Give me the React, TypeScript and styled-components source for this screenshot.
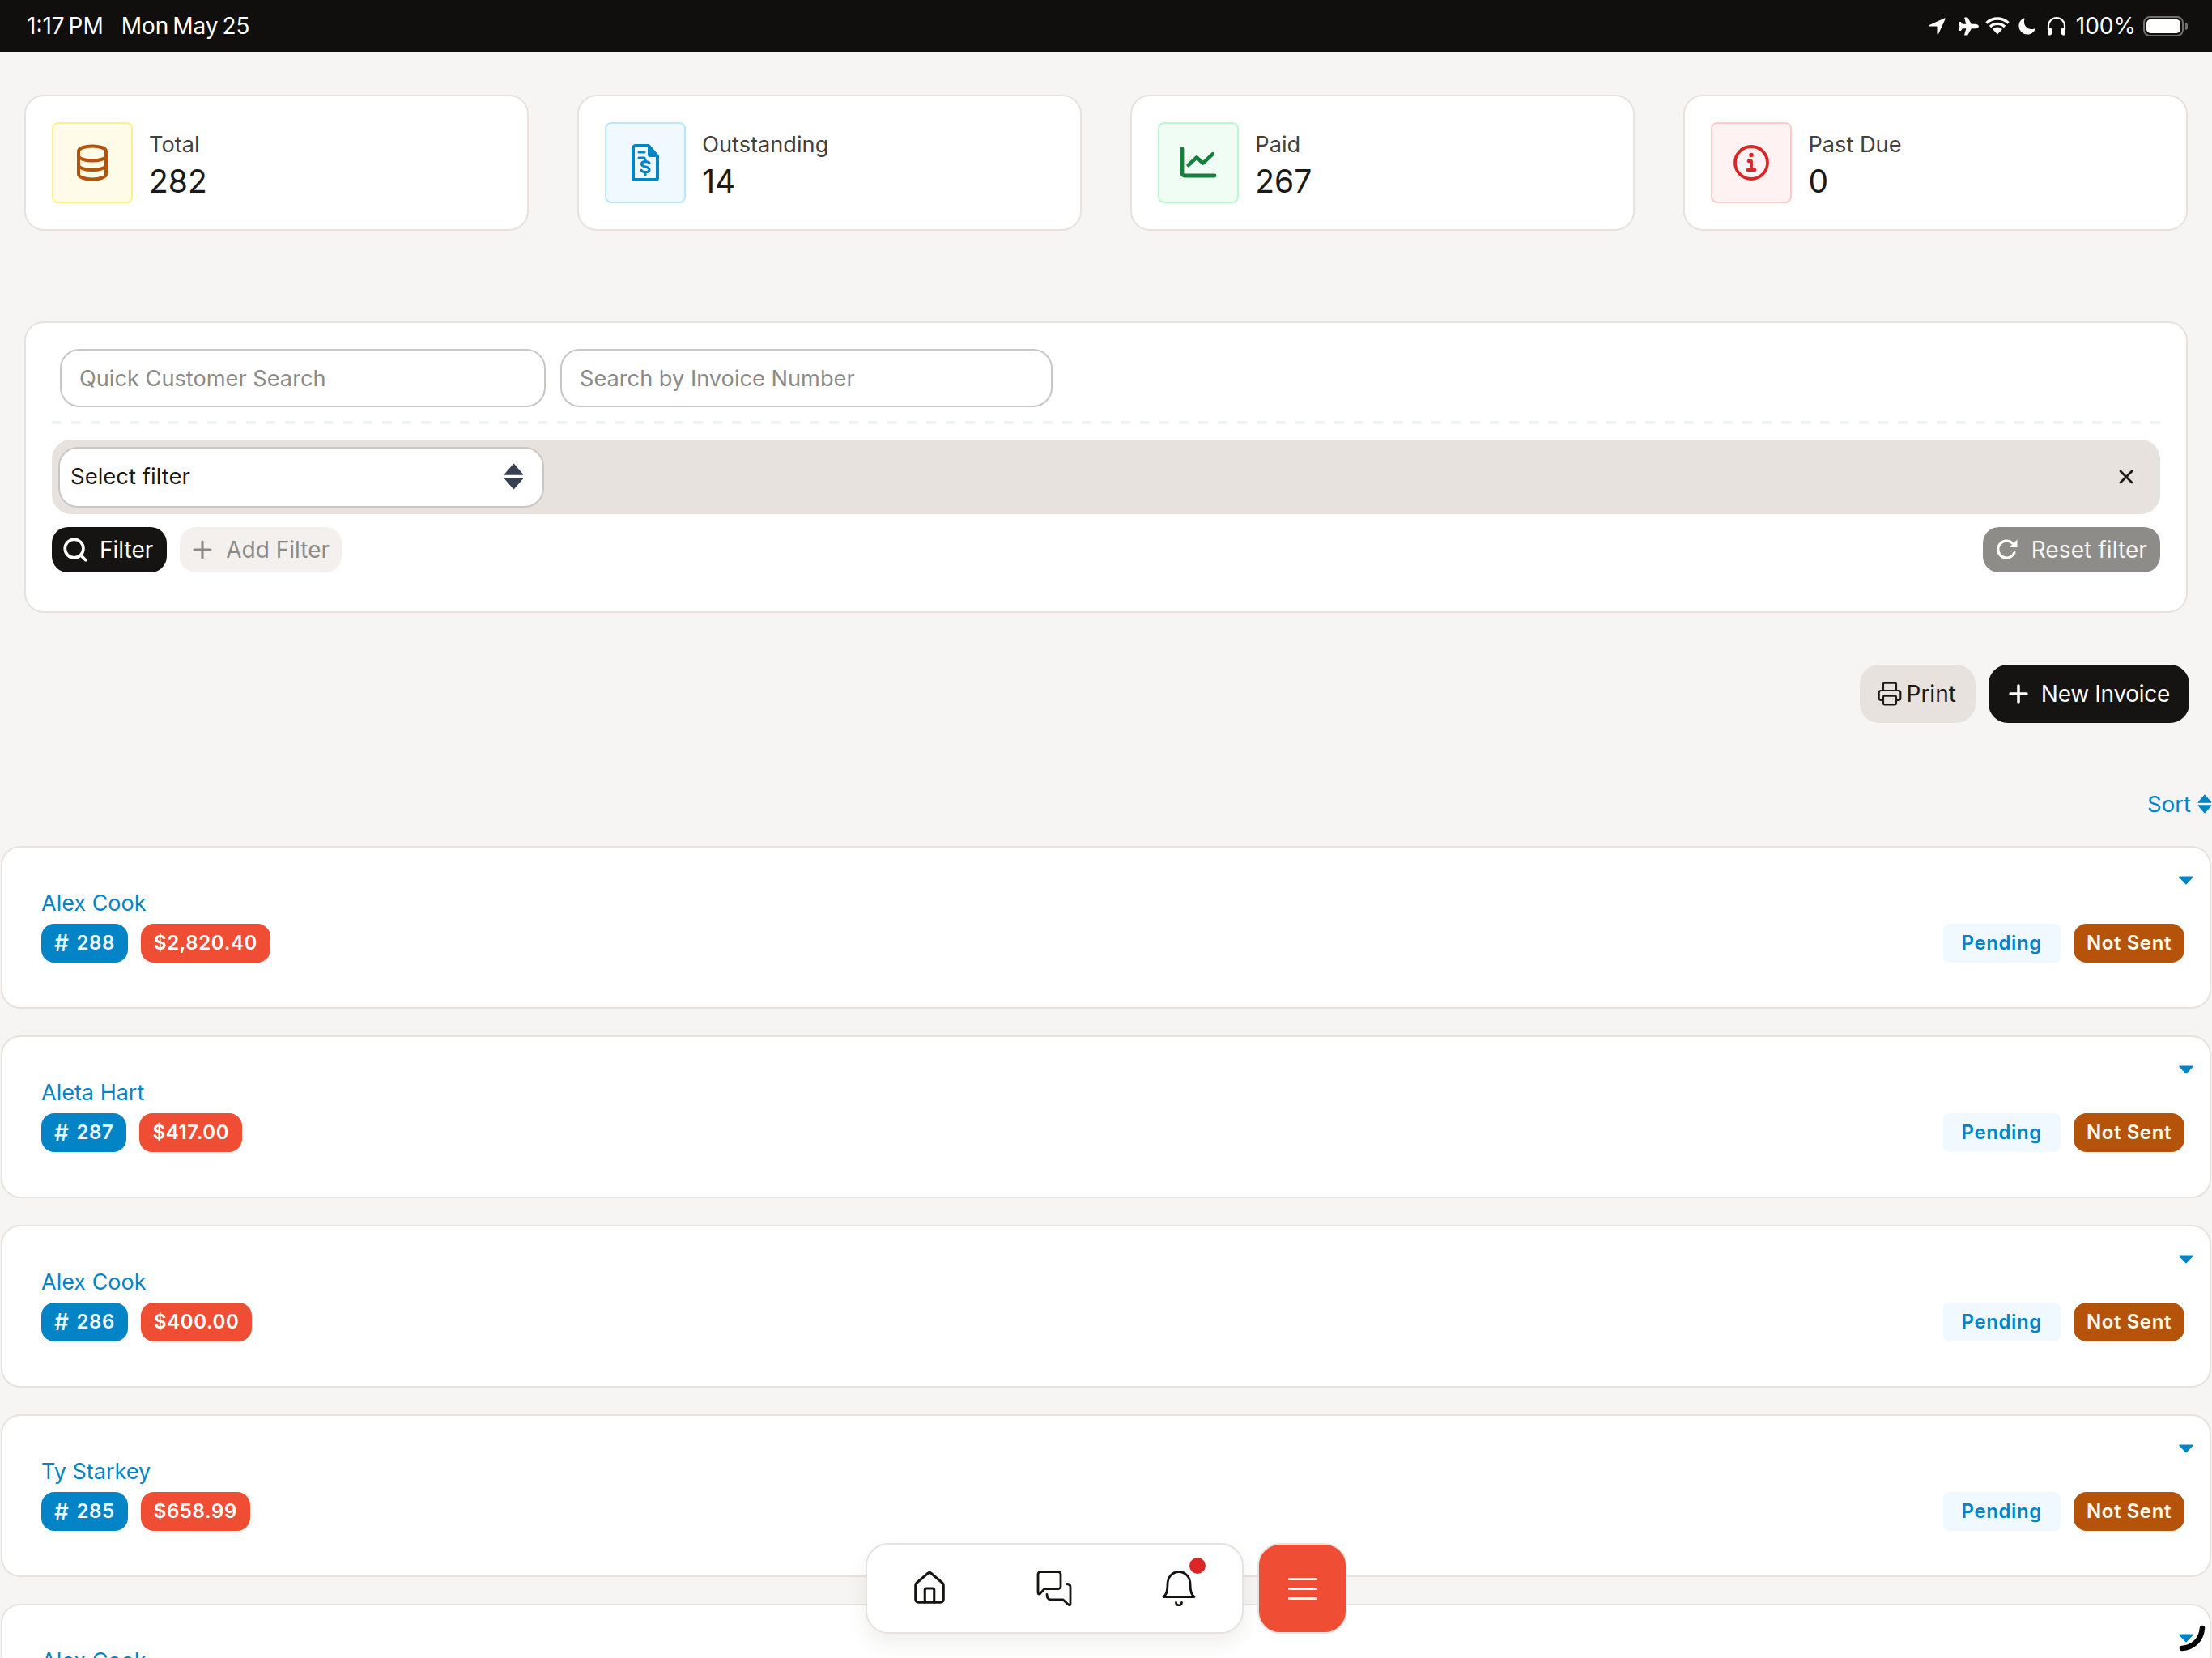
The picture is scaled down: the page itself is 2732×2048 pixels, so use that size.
import React from "react";
import styled, { createGlobalStyle } from "styled-components";
import { FaPlane } from "react-icons/fa";
import { IoMoon, IoNavigate } from "react-icons/io5";
import { Plus, Printer, Search, X, House } from "lucide-react";

const Global = createGlobalStyle`
  * { box-sizing: border-box; }
  html, body { margin: 0; padding: 0; width: 2732px; height: 2048px; overflow: hidden; background: #f6f5f3; }
  body { font-family: Inter, "Liberation Sans", sans-serif; color: #1c1917; }
  #root { height: 2048px; overflow: hidden; }
`;

const Page = styled.div`
  width: 2732px;
  height: 2048px;
  overflow: hidden;
`;

const StatusBar = styled.header`
  height: 64px;
  background: #100f0d;
  color: #fff;
  display: flex;
  align-items: center;
  justify-content: space-between;
  padding: 0 30px 0 33px;
  font-size: 28px;
`;

const StatusLeft = styled.div`
  display: flex;
  gap: 22px;
  word-spacing: -3px;
`;

const StatusRight = styled.div`
  display: flex;
  align-items: center;
  color: #fff;
`;

const StatusIcon = styled.span<{ $gap: number }>`
  display: flex;
  margin-right: ${(p) => p.$gap}px;
`;

const Percent = styled.span`
  margin-right: 9px;
  font-size: 28px;
`;

const Battery = styled.span`
  width: 50px;
  height: 25px;
  border: 2px solid #6f6f6e;
  border-radius: 8px;
  padding: 2px;
  display: flex;
  margin-right: 5px;
  position: relative;
  &::before {
    content: "";
    flex: 1;
    background: #fff;
    border-radius: 5px;
  }
  &::after {
    content: "";
    position: absolute;
    right: -7px;
    top: 6px;
    width: 3px;
    height: 9px;
    background: #6f6f6e;
    border-radius: 0 3px 3px 0;
  }
`;

const Stats = styled.section`
  display: grid;
  grid-template-columns: repeat(4, 622.5px);
  justify-content: space-between;
  margin: 53px 30px 0;
`;

const StatCard = styled.article`
  height: 168px;
  background: #fff;
  border: 2px solid #e7e2de;
  border-radius: 24px;
  padding: 0 32px;
  display: flex;
  align-items: center;
  gap: 20px;
`;

const IconBox = styled.div<{ $bg: string; $line: string }>`
  width: 100px;
  height: 100px;
  border-radius: 8px;
  background: ${(p) => p.$bg};
  border: 2px solid ${(p) => p.$line};
  display: flex;
  align-items: center;
  justify-content: center;
`;

const StatText = styled.div`
  display: flex;
  flex-direction: column;
  gap: 9px;
`;

const StatLabel = styled.span`
  font-size: 27.2px;
  line-height: 36px;
  color: #44403c;
`;

const StatValue = styled.span`
  font-size: 39px;
  line-height: 36px;
  color: #1c1917;
`;

const FilterCard = styled.section`
  margin: 112px 30px 0;
  height: 360px;
  background: #fff;
  border: 2px solid #e7e2de;
  border-radius: 24px;
  padding: 32px 32px 0;
`;

const SearchRow = styled.div`
  display: flex;
  gap: 18px;
  padding-left: 10px;
`;

const SearchInput = styled.input<{ $w: number }>`
  width: ${(p) => p.$w}px;
  height: 72px;
  border: 2px solid #c9c6c3;
  border-radius: 24px;
  background: #fff;
  padding: 0 22px;
  font: 400 27.2px Inter, sans-serif;
  color: #1c1917;
  outline: none;
  &::placeholder { color: #8c8a87; opacity: 1; }
`;

const Dashes = styled.div`
  height: 4px;
  margin-top: 17px;
  background: repeating-linear-gradient(90deg, #eff1f8 0 12px, transparent 12px 24px);
`;

const FilterBar = styled.div`
  margin-top: 19px;
  height: 92px;
  background: #e7e2de;
  border-radius: 24px;
  display: flex;
  align-items: center;
  justify-content: space-between;
  padding: 0 28px 0 8px;
`;

const SelectBox = styled.div`
  width: 600px;
  height: 75px;
  border: 2px solid #c9c6c3;
  border-radius: 24px;
  background: #fff;
  display: flex;
  align-items: center;
  justify-content: space-between;
  padding: 0 23px 2px 13px;
  font-size: 27.5px;
  color: #1c1917;
`;

const CloseButton = styled.button`
  display: flex;
  border: 0;
  padding: 0;
  background: none;
  color: #1c1917;
`;

const ButtonRow = styled.div`
  margin-top: 16px;
  display: flex;
  align-items: center;
  gap: 16px;
`;

const Pill = styled.button<{ $bg: string; $fg: string; $h?: number; $r?: number; $pad?: string; $gap?: number; $ls?: number }>`
  height: ${(p) => p.$h ?? 56}px;
  border-radius: ${(p) => p.$r ?? 20}px;
  background: ${(p) => p.$bg};
  color: ${(p) => p.$fg};
  border: 0;
  padding: ${(p) => p.$pad ?? "0 16px"};
  display: flex;
  align-items: center;
  gap: ${(p) => p.$gap ?? 17}px;
  font: 400 28px Inter, sans-serif;
  letter-spacing: ${(p) => p.$ls ?? 0}px;
  white-space: nowrap;
`;

const Spacer = styled.div`
  flex: 1;
`;

const Actions = styled.div`
  display: flex;
  justify-content: flex-end;
  gap: 16px;
  margin: 64px 28px 0 0;
`;

const SortRow = styled.div`
  display: flex;
  justify-content: flex-end;
  align-items: center;
  gap: 8px;
  margin-top: 82px;
  height: 34px;
  padding-top: 2px;
  color: #0284c7;
  font-size: 27.5px;
`;

const List = styled.div`
  display: flex;
  flex-direction: column;
  gap: 33.5px;
  margin: 36px 1px 0;
`;

const Row = styled.article`
  flex: none;
  height: 200.5px;
  background: #fff;
  border: 2px solid #e7e2de;
  border-radius: 24px;
  padding: 35px 31px 55px 48px;
  display: flex;
  justify-content: space-between;
`;

const RowLeft = styled.div`
  display: flex;
  flex-direction: column;
  justify-content: flex-end;
  gap: 8px;
`;

const CustomerName = styled.a`
  font-size: 27px;
  line-height: 34px;
  color: #0284c7;
`;

const RowRight = styled.div`
  display: flex;
  flex-direction: column;
  justify-content: space-between;
  align-items: flex-end;
`;

const CaretButton = styled.span`
  display: flex;
  margin-right: -11px;
`;

const Badges = styled.div`
  display: flex;
  gap: 16px;
`;

const Badge = styled.span<{ $bg: string; $fg: string; $r?: number; $pad?: number }>`
  height: 48px;
  padding: 0 ${(p) => p.$pad ?? 16}px;
  display: inline-flex;
  align-items: center;
  border-radius: ${(p) => p.$r ?? 16}px;
  background: ${(p) => p.$bg};
  color: ${(p) => p.$fg};
  font-size: 24px;
  font-weight: 600;
  letter-spacing: 0.6px;
  white-space: nowrap;
`;

const HashMark = styled.span`
  font-size: 28px;
  font-weight: 500;
  margin-right: 9px;
`;

const Dock = styled.nav`
  position: fixed;
  left: 1068.5px;
  top: 1906px;
  display: flex;
  gap: 17.5px;
`;

const DockCard = styled.div`
  width: 467px;
  height: 112px;
  background: #fff;
  border: 2px solid #e7e2de;
  border-radius: 28px;
  box-shadow: 0 12px 24px rgba(60, 50, 40, 0.08);
  display: grid;
  grid-template-columns: repeat(3, 154px);
`;

const DockItem = styled.button`
  position: relative;
  border: 0;
  padding: 0;
  background: none;
  color: #151412;
  display: flex;
  align-items: center;
  justify-content: center;
`;

const RedDot = styled.span`
  position: absolute;
  left: 90px;
  top: 16px;
  width: 20px;
  height: 20px;
  border-radius: 50%;
  background: #dc2626;
`;

const MenuButton = styled.button`
  width: 111px;
  height: 112px;
  background: #ef4e34;
  border: 2px solid #e7e2de;
  border-radius: 28px;
  display: flex;
  flex-direction: column;
  align-items: center;
  justify-content: center;
  gap: 9px;
  padding: 0;
`;

const MenuLine = styled.span`
  width: 35px;
  height: 3px;
  background: #fff;
  border-radius: 1px;
`;

const PenStroke = styled.svg`
  position: fixed;
  left: 2688px;
  top: 2005px;
`;

const StackIcon = () => (
  <svg width="40" height="46" viewBox="0 0 40 46" fill="none" stroke="#b45309" strokeWidth="4" strokeLinecap="round" strokeLinejoin="round">
    <path d="M3 9c0-4 8-6.500 17-6.500S37 5 37 9v28c0 4-8 6.500-17 6.500S3 41 3 37z" />
    <path d="M3 14c0 4 8 6.500 17 6.500S37 18 37 14" />
    <path d="M3 25.500c0 4 8 6.500 17 6.500s17-2.500 17-6.500" />
  </svg>
);

const InvoiceIcon = () => (
  <svg width="34" height="46" viewBox="0 0 34 46" fill="none" stroke="#0284c7" strokeLinecap="round" strokeLinejoin="round">
    <path d="M5 2h16l11 13v27a2 2 0 0 1-2 2H4a2 2 0 0 1-2-2V5a3 3 0 0 1 3-3z" strokeWidth="4" />
    <path d="M21 2v11a2 2 0 0 0 2 2h9z" fill="#0284c7" strokeWidth="2" />
    <path d="M9 10h7M9 17h7" strokeWidth="3" />
    <path d="M22 23.500c-1-1.500-3-2-5-2-2.800 0-4.500 1.300-4.500 3.300 0 4.400 9.500 2.200 9.500 6.600 0 2-1.900 3.300-4.700 3.300-2.200 0-4.200-.7-5.300-2.300M17 19v3M17 34.500V38" strokeWidth="3.200" />
  </svg>
);

const ChartIcon = () => (
  <svg width="46" height="40" viewBox="0 0 46 40" fill="none" stroke="#15803d" strokeLinecap="round" strokeLinejoin="round">
    <path d="M3 3v30a3 3 0 0 0 3 3h37" strokeWidth="4.800" />
    <path d="M10.700 23L21 13.300l7.700 7.400 12-11.400" strokeWidth="4.600" />
  </svg>
);

const InfoIcon = () => (
  <svg width="46" height="46" viewBox="0 0 46 46" fill="none" stroke="#dc2626" strokeLinecap="round" strokeLinejoin="round">
    <circle cx="23" cy="23" r="20" strokeWidth="3.800" />
    <circle cx="23" cy="13.500" r="2.800" fill="#dc2626" stroke="none" />
    <path d="M19.500 21H23v11M18.500 32h9" strokeWidth="3.800" />
  </svg>
);

const WifiIcon = () => (
  <svg width="30" height="22" viewBox="0 0 30 22" fill="none" stroke="#fff" strokeWidth="3.400">
    <path d="M1.500 7.500a19.500 19.500 0 0 1 27 0M6 12a13 13 0 0 1 18 0" />
    <path d="M15 21.500l-6-6.500a8.500 8.500 0 0 1 12 0z" fill="#fff" stroke="none" />
  </svg>
);

const HeadphoneIcon = () => (
  <svg width="24" height="24" viewBox="0 0 24 24" fill="none" stroke="#fff" strokeLinecap="round">
    <path d="M2 17v-5a10 10 0 0 1 20 0v5" strokeWidth="2.200" />
    <rect x="1" y="14" width="5" height="9.500" rx="2.200" fill="#fff" stroke="none" />
    <rect x="18" y="14" width="5" height="9.500" rx="2.200" fill="#fff" stroke="none" />
  </svg>
);

const ResetIcon = () => (
  <svg width="28" height="28" viewBox="0 0 28 28" fill="none" stroke="#fff" strokeWidth="3.200" strokeLinecap="round">
    <path d="M23 17.500A10.500 10.500 0 1 1 20.500 6" />
    <path d="M26.500 1.500V11H17z" fill="#fff" stroke="none" />
  </svg>
);

const UpDown = ({ color, w, h }: { color: string; w: number; h: number }) => (
  <svg width={w} height={h} viewBox="0 0 24 32" fill={color} stroke={color} strokeWidth="1.500" strokeLinejoin="round">
    <path d="M12 1.500L22.500 13.500H1.500z" />
    <path d="M12 30.500L22.500 18.500H1.500z" />
  </svg>
);

const RowCaret = () => (
  <svg width="18" height="11" viewBox="0 0 18 11" fill="#0284c7">
    <path d="M1 .5h16a.8.8 0 0 1 .6 1.300L9.800 10a1 1 0 0 1-1.600 0L.4 1.800A.8.8 0 0 1 1 .5z" />
  </svg>
);

const ChatIcon = () => (
  <svg width="44" height="44" viewBox="0 0 44 44" fill="none" stroke="currentColor" strokeWidth="2.800" strokeLinecap="round" strokeLinejoin="round">
    <path d="M2 4.500a3 3 0 0 1 3-3h22a3 3 0 0 1 3 3v15a3 3 0 0 1-3 3H10l-5.500 6q-2.500 1.500-2.500-1.500z" />
    <path d="M37.500 16.500q4.500 0 4.500 4v20q0 3.500-2.500 1.500L33 36H18q-5 0-5-6.500" />
  </svg>
);

const BellIcon = () => (
  <svg width="44" height="44" viewBox="0 0 44 44" fill="none" stroke="currentColor" strokeWidth="2.800" strokeLinecap="round" strokeLinejoin="round">
    <path d="M3 32.500c4-2.500 5-9 5-15.500C8 8 14 1.500 22 1.500S36 8 36 17c0 6.500 1 13 5 15.500z" />
    <path d="M18.500 39.500a3.500 3.500 0 0 0 7 0" />
  </svg>
);

const stats = [
  { label: "Total", value: "282", bg: "#fefce8", line: "#fef08a", icon: <StackIcon /> },
  { label: "Outstanding", value: "14", bg: "#f0f9ff", line: "#bae6fd", icon: <InvoiceIcon /> },
  { label: "Paid", value: "267", bg: "#f0fdf4", line: "#bbf7d0", icon: <ChartIcon /> },
  { label: "Past Due", value: "0", bg: "#fef2f2", line: "#fecaca", icon: <InfoIcon /> },
];

const invoices = [
  { name: "Alex Cook", id: "288", amount: "$2,820.40" },
  { name: "Aleta Hart", id: "287", amount: "$417.00" },
  { name: "Alex Cook", id: "286", amount: "$400.00" },
  { name: "Ty Starkey", id: "285", amount: "$658.99" },
  { name: "Alex Cook", id: "284", amount: "$400.00" },
];

export default function App() {
  return (
    <Page>
      <Global />
      <StatusBar>
        <StatusLeft>
          <span>1:17 PM</span>
          <span>Mon May 25</span>
        </StatusLeft>
        <StatusRight>
          <StatusIcon $gap={14}><IoNavigate size={25} /></StatusIcon>
          <StatusIcon $gap={8}><FaPlane size={25} /></StatusIcon>
          <StatusIcon $gap={10}><WifiIcon /></StatusIcon>
          <StatusIcon $gap={13}><IoMoon size={23} /></StatusIcon>
          <StatusIcon $gap={12}><HeadphoneIcon /></StatusIcon>
          <Percent>100%</Percent>
          <Battery />
        </StatusRight>
      </StatusBar>

      <Stats>
        {stats.map((s) => (
          <StatCard key={s.label}>
            <IconBox $bg={s.bg} $line={s.line}>{s.icon}</IconBox>
            <StatText>
              <StatLabel>{s.label}</StatLabel>
              <StatValue>{s.value}</StatValue>
            </StatText>
          </StatCard>
        ))}
      </Stats>

      <FilterCard>
        <SearchRow>
          <SearchInput $w={600} placeholder="Quick Customer Search" />
          <SearchInput $w={608} placeholder="Search by Invoice Number" />
        </SearchRow>
        <Dashes />
        <FilterBar>
          <SelectBox>
            <span>Select filter</span>
            <UpDown color="#374151" w={25} h={33} />
          </SelectBox>
          <CloseButton><X size={28} strokeWidth={2.4} /></CloseButton>
        </FilterBar>
        <ButtonRow>
          <Pill $bg="#151412" $fg="#fff" $gap={13} $pad="0 17px 0 12px"><Search size={34} strokeWidth={2.6} />Filter</Pill>
          <Pill $bg="#f3f0ed" $fg="#8c8a87" $gap={12} $pad="0 15px 0 11px"><Plus size={34} strokeWidth={2.2} />Add Filter</Pill>
          <Spacer />
          <Pill $bg="#8e8c89" $fg="#f6f5f3" $gap={16} $ls={0.1}><ResetIcon />Reset filter</Pill>
        </ButtonRow>
      </FilterCard>

      <Actions>
        <Pill $bg="#e7e2de" $fg="#1c1917" $h={72} $r={24} $pad="0 24px 0 21px" $gap={5}><Printer size={32} strokeWidth={1.6} />Print</Pill>
        <Pill $bg="#151412" $fg="#fff" $h={72} $r={24} $pad="0 24px 0 20px" $gap={11} $ls={-0.3}><Plus size={34} strokeWidth={2.5} />New Invoice</Pill>
      </Actions>

      <SortRow>
        <span>Sort</span>
        <UpDown color="#0284c7" w={18} h={24} />
      </SortRow>

      <List>
        {invoices.map((inv) => (
          <Row key={inv.id}>
            <RowLeft>
              <CustomerName>{inv.name}</CustomerName>
              <Badges>
                <Badge $bg="#0284c7" $fg="#f0f9ff"><HashMark>#</HashMark>{inv.id}</Badge>
                <Badge $bg="#ef4e34" $fg="#fff">{inv.amount}</Badge>
              </Badges>
            </RowLeft>
            <RowRight>
              <CaretButton><RowCaret /></CaretButton>
              <Badges>
                <Badge $bg="#f0f9ff" $fg="#0284c7" $r={8} $pad={23}>Pending</Badge>
                <Badge $bg="#b45309" $fg="#fffbeb">Not Sent</Badge>
              </Badges>
            </RowRight>
          </Row>
        ))}
      </List>

      <Dock>
        <DockCard>
          <DockItem><House size={46} strokeWidth={1.6} /></DockItem>
          <DockItem><ChatIcon /></DockItem>
          <DockItem><BellIcon /><RedDot /></DockItem>
        </DockCard>
        <MenuButton>
          <MenuLine />
          <MenuLine />
          <MenuLine />
        </MenuButton>
      </Dock>

      <PenStroke width="40" height="40" viewBox="0 0 40 40" fill="none" stroke="#000" strokeWidth="6.500" strokeLinecap="round">
        <path d="M32 6C31 20 21 30 7 31" />
      </PenStroke>
    </Page>
  );
}
